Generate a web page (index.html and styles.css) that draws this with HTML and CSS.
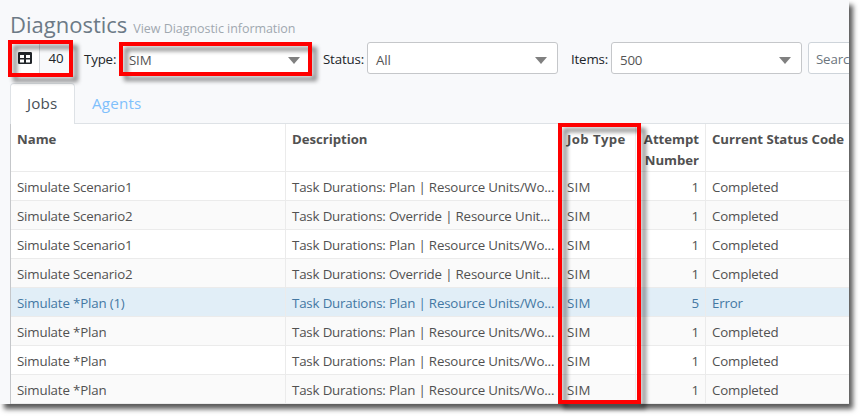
FILE: index.html
```html
<!DOCTYPE html>
<html lang="en">
<head>
<meta charset="utf-8">
<title>Diagnostics</title>
<link rel="stylesheet" href="styles.css">
</head>
<body>
<div class="frame">
<main class="page">
  <header class="heading"><h1>Diagnostics</h1><span class="subtitle">View Diagnostic information</span></header>
  <div class="toolbar">
    <div class="counter">
      <span class="grid-button"><svg viewBox="0 0 14 12" width="14" height="12"><path fill="#212529" fill-rule="evenodd" d="M1.3 0h11.4Q14 0 14 1.3v9.4Q14 12 12.7 12H1.3Q0 12 0 10.7V1.3Q0 0 1.3 0ZM2 3v3h4V3ZM8 3v3h4V3ZM2 7.5v3h4v-3ZM8 7.5v3h4v-3Z"/></svg></span>
      <span class="count">40</span>
    </div>
    <label class="type-label">Type:</label>
    <div class="select"><span>SIM</span><i class="arrow"></i></div>
    <label class="status-label">Status:</label>
    <div class="select"><span>All</span><i class="arrow"></i></div>
    <label class="items-label">Items:</label>
    <div class="select"><span>500</span><i class="arrow"></i></div>
    <div class="search">Search</div>
  </div>
  <nav class="tabs"><span class="tab active">Jobs</span><span class="tab">Agents</span></nav>
  <table>
    <colgroup><col class="c-name"><col class="c-desc"><col class="c-type"><col class="c-attempt"><col class="c-status"></colgroup>
    <thead><tr><th>Name</th><th>Description</th><th class="type">Job Type</th><th class="num">Attempt Number</th><th>Current Status Code</th></tr></thead>
    <tbody>
      <tr><td>Simulate Scenario1</td><td>Task Durations: Plan | Resource Units/Wo...</td><td class="type">SIM</td><td class="num">1</td><td>Completed</td></tr>
      <tr><td>Simulate Scenario2</td><td>Task Durations: Override | Resource Unit...</td><td class="type">SIM</td><td class="num">1</td><td>Completed</td></tr>
      <tr><td>Simulate Scenario1</td><td>Task Durations: Plan | Resource Units/Wo...</td><td class="type">SIM</td><td class="num">1</td><td>Completed</td></tr>
      <tr><td>Simulate Scenario2</td><td>Task Durations: Override | Resource Unit...</td><td class="type">SIM</td><td class="num">1</td><td>Completed</td></tr>
      <tr class="selected"><td>Simulate *Plan (1)</td><td>Task Durations: Plan | Resource Units/Wo...</td><td class="type">SIM</td><td class="num">5</td><td>Error</td></tr>
      <tr><td>Simulate *Plan</td><td>Task Durations: Plan | Resource Units/Wo...</td><td class="type">SIM</td><td class="num">1</td><td>Completed</td></tr>
      <tr><td>Simulate *Plan</td><td>Task Durations: Plan | Resource Units/Wo...</td><td class="type">SIM</td><td class="num">1</td><td>Completed</td></tr>
      <tr><td>Simulate *Plan</td><td>Task Durations: Plan | Resource Units/Wo...</td><td class="type">SIM</td><td class="num">1</td><td>Completed</td></tr>
    </tbody>
  </table>
</main>
<div class="mark mark-count"></div>
<div class="mark mark-type"></div>
<div class="mark mark-column"></div>
</div>
</body>
</html>
```
FILE: styles.css
```css
* { box-sizing: border-box; }
body { margin: 0; min-height: 419px; background: #fff; font: 13.3px/21px "Open Sans", "Noto Sans", sans-serif; color: #212529; letter-spacing: -0.17px; }
.frame { position: relative; width: 849px; height: 404px; }
.page { width: 849px; height: 404px; overflow: hidden; background: #f8f9fb; padding-left: 10px; box-shadow: 4px 5px 5px rgba(0, 0, 0, .65); }
.heading { display: flex; align-items: baseline; height: 42px; padding-top: 8px; white-space: nowrap; }
h1 { margin: 0; font-size: 22px; line-height: 32px; font-weight: 400; color: #6c7a86; letter-spacing: 0; }
.subtitle { margin-left: 6px; font-size: 12.5px; color: #a0a8b0; letter-spacing: -0.05px; }
.toolbar { display: flex; height: 32px; white-space: nowrap; line-height: 34px; }
.toolbar > * { flex-shrink: 0; }
.counter { display: flex; width: 61px; border: 1px solid #dee2e6; border-radius: 3px; background: #fff; }
.grid-button { width: 29px; display: flex; align-items: center; padding-left: 7px; border-right: 1px solid #d5d8dc; }
.count { flex: 1; text-align: center; background: #f8f9fb; line-height: 31px; padding-left: 2px; }
.type-label { width: 49px; padding-left: 13px; }
.status-label { width: 56px; padding-left: 12px; }
.items-label { width: 53px; padding-left: 13px; }
.select { width: 191px; display: flex; justify-content: space-between; align-items: center; padding: 4px 10px 0 8px; border: 1px solid #c5c7ca; border-radius: 3px; background: #fff; color: #555; }
.arrow { border: 6px solid transparent; border-top: 7px solid #808080; border-bottom: 0; }
.search { width: 100px; margin-left: 6px; padding-left: 7px; line-height: 32px; border: 1px solid #ced4da; border-radius: 3px; background: #fff; color: #6c757d; }
.tabs { display: flex; height: 50px; padding-top: 9px; border-bottom: 1px solid #dee2e6; font-size: 15.2px; line-height: 40px; letter-spacing: 0.2px; }
.tab { padding: 0 17px; color: #7fc0fb; height: 41px; }
.tab.active { width: 65px; padding: 0 0 0 16px; background: #fff; color: #495057; border: 1px solid #dee2e6; border-bottom: 0; border-radius: 4px 4px 0 0; line-height: 39px; }
table { width: 860px; table-layout: fixed; border-collapse: separate; border-spacing: 0; background: #fff; color: #515151; border-left: 1px solid #c5c7ca; }
.c-name { width: 275px; }
.c-desc { width: 275px; }
.c-type { width: 75px; }
.c-attempt { width: 70px; }
th, td { border: solid #ebebeb; border-width: 0 1px 1px 0; padding: 0 6px; text-align: left; white-space: nowrap; }
th { height: 48px; padding-top: 5px; vertical-align: top; font-size: 13.2px; font-weight: 700; letter-spacing: -0.03px; }
td { height: 29px; padding-top: 3px; line-height: 25px; }
th.type { letter-spacing: 0.4px; }
td.type { letter-spacing: 0.2px; }
th.num { white-space: normal; padding-left: 0; }
.num { text-align: right; }
tbody tr:nth-child(even) { background: #fafafa; }
tbody tr.selected { background: #e1eef7; color: #4478a3; }
.mark { position: absolute; border: 4px solid #f00; filter: drop-shadow(5px 5px 2px rgba(0, 0, 0, .45)); }
.mark-count { left: 8px; top: 40px; width: 65px; height: 37px; }
.mark-type { left: 119px; top: 42px; width: 193px; height: 34px; }
.mark-column { left: 558px; top: 123px; width: 83px; height: 281px; }
```
